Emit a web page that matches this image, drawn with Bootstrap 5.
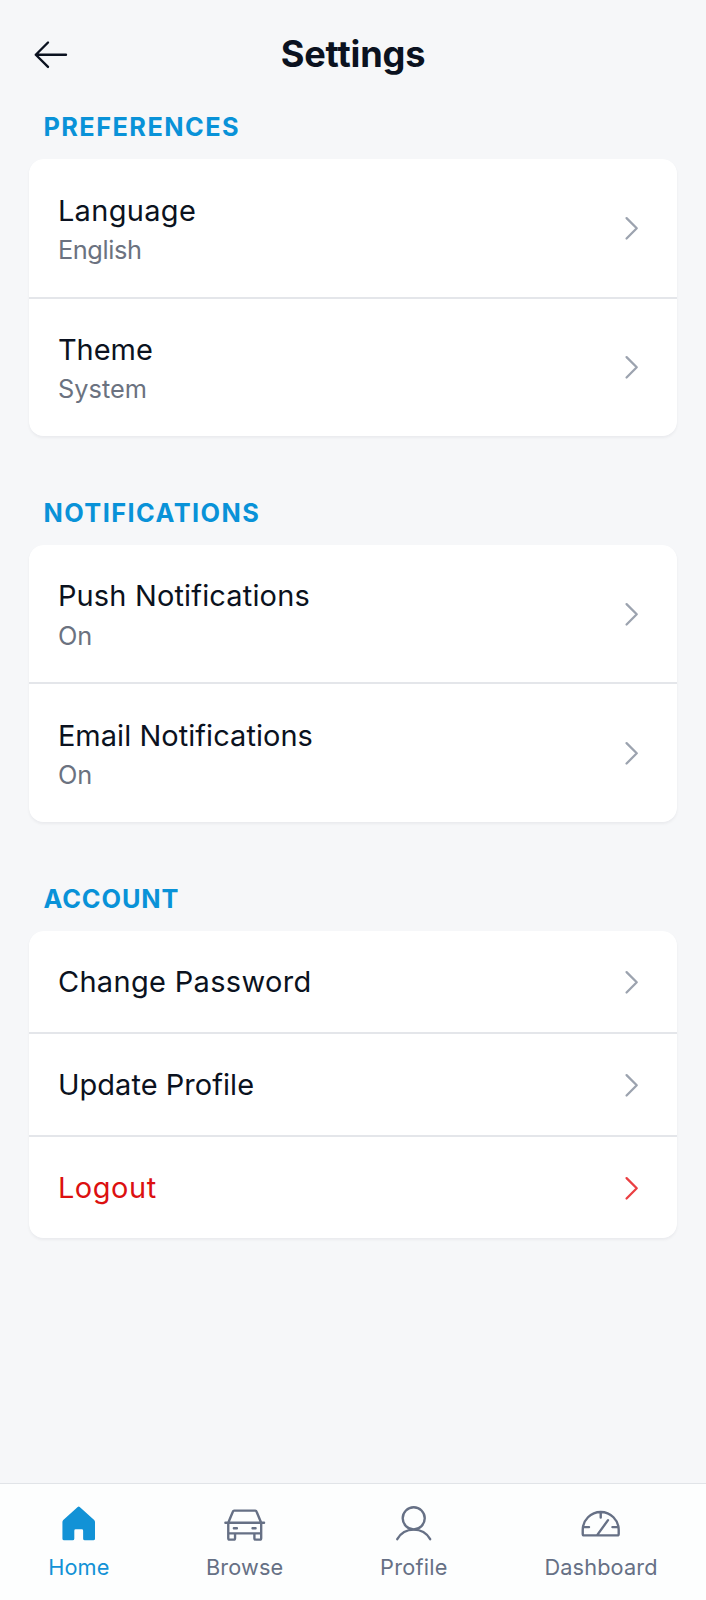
<!DOCTYPE html>
<html lang="en">
<head>
<meta charset="utf-8">
<meta name="viewport" content="width=device-width, initial-scale=1">
<title>Settings</title>
<link href="https://cdn.jsdelivr.net/npm/bootstrap@5.3.0/dist/css/bootstrap.min.css" rel="stylesheet">
<style>
  html { font-size: 28.964px; }
  body { font-family: Inter, sans-serif; background: #f6f7f9; color: #0b1220; }
  svg { display: block; fill: none; stroke: currentColor; stroke-linecap: round; stroke-linejoin: round; }
  .topbar { height: 109px; display: grid; grid-template-columns: 1fr auto 1fr; }
  .topbar h1 { font-size: 1.25rem; font-weight: 700; line-height: 1.75rem; letter-spacing: -.0045em; }
  .back-icon { width: 1.5rem; height: 1.5rem; }
  .section-label { font-size: .875rem; line-height: 1.25rem; font-weight: 650; letter-spacing: .057em; color: #0992d8; margin-bottom: calc(.5rem - .6px); }
  .section-label.tighter { letter-spacing: .036em; }
  .settings-section { margin-bottom: calc(2rem + .9px); }
  .settings-list { --bs-list-group-border-radius: .5rem; border-radius: .5rem; box-shadow: 0 2px 3px rgba(15, 23, 42, .05); overflow: hidden; }
  .settings-list .list-group-item { border: 0; color: #0b1220; line-height: 1.5; padding: calc(1rem + .5px) 1rem calc(1rem - .5px); }
  .settings-list .list-group-item + .list-group-item { border-top: 2px solid #e4e6ea; padding-top: calc(1rem + .3px); }
  .item-value { font-size: .875rem; line-height: 1.25rem; color: #6b7280; }
  .track-minus { letter-spacing: -.015em; }
  .track-1 { letter-spacing: .002em; }
  .track-2 { letter-spacing: .006em; }
  .track-3 { letter-spacing: .012em; }
  .track-4 { letter-spacing: .019em; }
  .caret { width: 1.125rem; height: 1.125rem; color: #9ca3af; stroke-width: 18; }
  .settings-list .item-danger { color: #dc1010; }
  .item-danger .caret { color: #ea3f42; }
  .tabbar { background: #fdfefe; border-top: 1px solid #e1e4e8; padding: .625rem 0; }
  .tabbar a { font-size: .75rem; line-height: 1rem; color: #667085; text-decoration: none; gap: .25rem; }
  .tabbar a.active { color: #1292d6; }
  .tabbar svg { width: 1.5rem; height: 1.5rem; stroke-width: 14; }
</style>
</head>
<body>
<div class="d-flex flex-column min-vh-100">
  <header class="topbar align-items-center px-3">
    <a href="#" class="text-reset" aria-label="Back">
      <svg class="back-icon" viewBox="0 0 256 256" stroke-width="14"><path d="M218 128H40M112 56 40 128l72 72"/></svg>
    </a>
    <h1 class="m-0">Settings</h1>
  </header>

  <main class="px-3">
    <section class="settings-section">
      <h2 class="section-label ps-2">PREFERENCES</h2>
      <div class="list-group settings-list">
        <a href="#" class="list-group-item d-flex align-items-center justify-content-between">
          <div><div class="track-3">Language</div><div class="item-value track-minus">English</div></div>
          <svg class="caret" viewBox="0 0 256 256"><path d="m83 48 80 80-80 80"/></svg>
        </a>
        <a href="#" class="list-group-item d-flex align-items-center justify-content-between">
          <div><div>Theme</div><div class="item-value track-1">System</div></div>
          <svg class="caret" viewBox="0 0 256 256"><path d="m83 48 80 80-80 80"/></svg>
        </a>
      </div>
    </section>

    <section class="settings-section">
      <h2 class="section-label ps-2">NOTIFICATIONS</h2>
      <div class="list-group settings-list">
        <a href="#" class="list-group-item d-flex align-items-center justify-content-between">
          <div><div class="track-2">Push Notifications</div><div class="item-value">On</div></div>
          <svg class="caret" viewBox="0 0 256 256"><path d="m83 48 80 80-80 80"/></svg>
        </a>
        <a href="#" class="list-group-item d-flex align-items-center justify-content-between">
          <div><div class="track-1">Email Notifications</div><div class="item-value">On</div></div>
          <svg class="caret" viewBox="0 0 256 256"><path d="m83 48 80 80-80 80"/></svg>
        </a>
      </div>
    </section>

    <section class="settings-section">
      <h2 class="section-label tighter ps-2">ACCOUNT</h2>
      <div class="list-group settings-list">
        <a href="#" class="list-group-item d-flex align-items-center justify-content-between">
          <div class="track-3">Change Password</div>
          <svg class="caret" viewBox="0 0 256 256"><path d="m83 48 80 80-80 80"/></svg>
        </a>
        <a href="#" class="list-group-item d-flex align-items-center justify-content-between">
          <div class="track-1">Update Profile</div>
          <svg class="caret" viewBox="0 0 256 256"><path d="m83 48 80 80-80 80"/></svg>
        </a>
        <a href="#" class="list-group-item item-danger d-flex align-items-center justify-content-between">
          <div class="track-4">Logout</div>
          <svg class="caret" viewBox="0 0 256 256"><path d="m83 48 80 80-80 80"/></svg>
        </a>
      </div>
    </section>
  </main>

  <nav class="tabbar d-flex justify-content-around mt-auto">
    <a href="#" class="active d-flex flex-column align-items-center">
      <svg viewBox="0 0 256 256"><path fill="currentColor" stroke="none" d="M122 29a9 9 0 0 1 12 0l85 77a16 16 0 0 1 5 12v98a10 10 0 0 1-10 10h-50a10 10 0 0 1-10-10v-47a8 8 0 0 0-8-8h-36a8 8 0 0 0-8 8v47a10 10 0 0 1-10 10H42a10 10 0 0 1-10-10v-98a16 16 0 0 1 5-12z"/></svg>
      <span class="track-1">Home</span>
    </a>
    <a href="#" class="d-flex flex-column align-items-center">
      <svg viewBox="0 0 256 256"><path d="M14 122h228M31 122l27-65a9 9 0 0 1 8-6h124a9 9 0 0 1 8 6l27 65M31 122v92a8 8 0 0 0 8 8h24a8 8 0 0 0 8-8v-29M225 122v92a8 8 0 0 1-8 8h-24a8 8 0 0 1-8-8v-29M31 185h194M64 155h18M174 155h18"/></svg>
      <span class="track-2">Browse</span>
    </a>
    <a href="#" class="d-flex flex-column align-items-center">
      <svg viewBox="0 0 256 256"><circle cx="128" cy="96" r="65"/><path d="M31 219a112 112 0 0 1 194 0"/></svg>
      <span class="track-3">Profile</span>
    </a>
    <a href="#" class="d-flex flex-column align-items-center">
      <svg viewBox="0 0 256 256"><path d="M22 189v-24a106 106 0 0 1 212 0v24a8 8 0 0 1-8 8H30a8 8 0 0 1-8-8zM128 60v32M26 148h33M230 148h-33M108 194l63-87"/></svg>
      <span class="track-2">Dashboard</span>
    </a>
  </nav>
</div>
<script src="https://cdn.jsdelivr.net/npm/bootstrap@5.3.0/dist/js/bootstrap.bundle.min.js"></script>
</body>
</html>
